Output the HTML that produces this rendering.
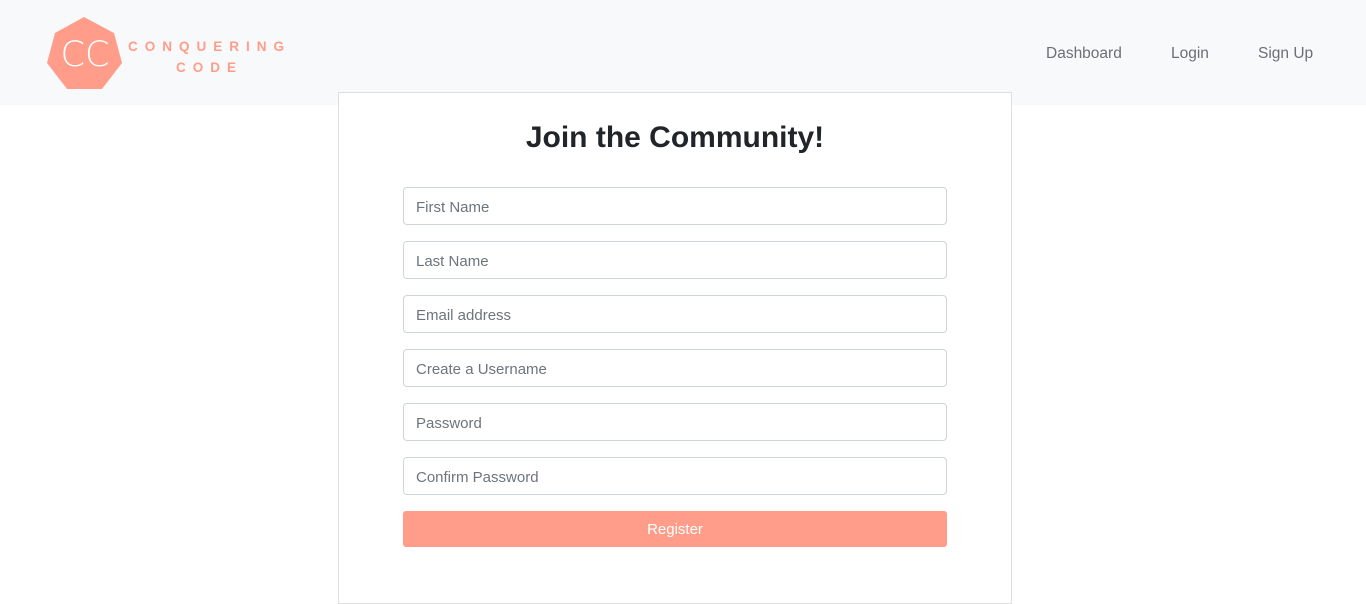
<!DOCTYPE html>
<html><head><style>
body{margin:0;width:1366px;height:604px;background:#fff;font-family:"Liberation Sans",sans-serif;position:relative;overflow:hidden}
.hdr{position:absolute;left:0;top:0;width:1366px;height:105px;background:#f8f9fa}
.brand{position:absolute;left:127px;top:36px;color:#ff9d8a;font-weight:bold;font-size:13.5px;letter-spacing:7px;text-align:center;line-height:21px;width:165px}
.nav{position:absolute;top:45px;font-size:15.5px;color:#6c6f73}
.card{position:absolute;left:338px;top:92px;width:672px;height:510px;border:1px solid #dfdfdf;background:#fff}
h1{position:absolute;left:0;width:672px;top:28px;margin:0;text-align:center;font-size:30px;font-weight:bold;color:#212529}
.in{position:absolute;left:64px;width:530px;height:36px;border:1px solid #ced4da;border-radius:4px;font-size:15px;color:#6c757d;line-height:40px;padding-left:12px}
.btn{position:absolute;left:64px;top:418px;width:544px;height:36px;background:#ff9d8a;border-radius:3px;color:#fff;text-align:center;line-height:37px;font-size:15px}
</style></head><body>
<div class="hdr">
<svg style="position:absolute;left:0;top:0" width="130" height="105"><polygon points="84,17 114,33 122,63 102,89 67,89 47,63 55,33" fill="#ff9d8a"/>
<text x="85" y="66" text-anchor="middle" fill="#fff" font-size="35" font-family="DejaVu Sans" style="font-weight:300">CC</text></svg>
<div class="brand">CONQUERING<br>CODE</div>
<div class="nav" style="left:1046px">Dashboard</div>
<div class="nav" style="left:1171px">Login</div>
<div class="nav" style="left:1258px">Sign Up</div>
</div>
<div class="card">
<h1>Join the Community!</h1>
<div class="in" style="top:94px">First Name</div>
<div class="in" style="top:148px">Last Name</div>
<div class="in" style="top:202px">Email address</div>
<div class="in" style="top:256px">Create a Username</div>
<div class="in" style="top:310px">Password</div>
<div class="in" style="top:364px">Confirm Password</div>
<div class="btn">Register</div>
</div>
</body></html>
